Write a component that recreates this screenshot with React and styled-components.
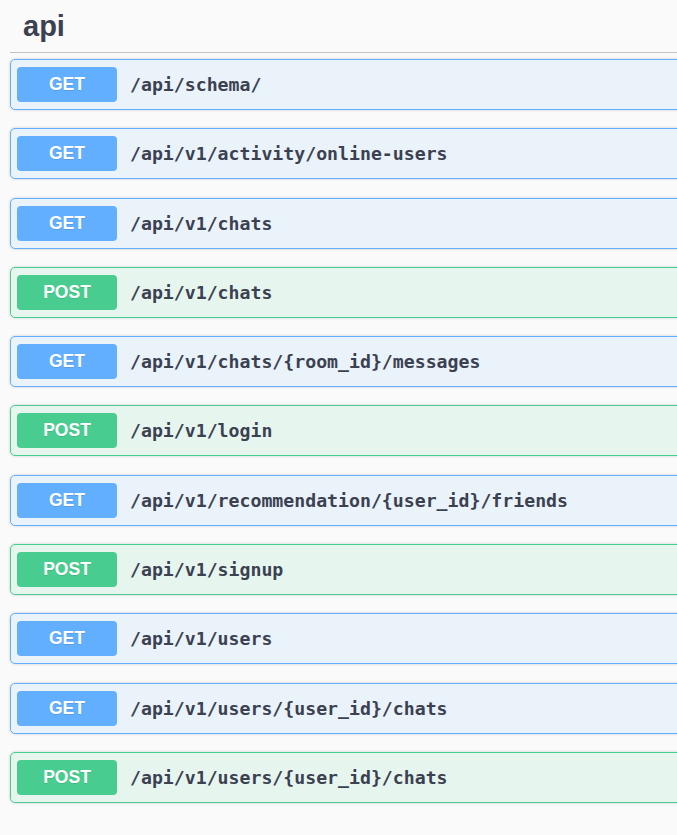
import React from "react";
import styled, { createGlobalStyle } from "styled-components";

const Global = createGlobalStyle`
  html, body {
    margin: 0;
    padding: 0;
    background: #fafafa;
    overflow: hidden;
  }
  body {
    font-family: "Liberation Sans", Arial, sans-serif;
    color: #3b4151;
  }
`;

const Page = styled.div`
  box-sizing: border-box;
  width: 100%;
  padding: 0 0 0 10px;
  overflow: hidden;
`;

const Section = styled.section`
  margin-right: -12px;
`;

const TagHeader = styled.h4`
  margin: 0;
  height: 52px;
  display: flex;
  align-items: center;
  padding: 0 0 0 13px;
  font-family: "Liberation Sans", Arial, sans-serif;
  font-size: 29px;
  font-weight: 700;
  color: #3b4151;
  border-bottom: 1px solid rgba(59, 65, 81, 0.3);
  margin-bottom: 6px;
`;

const List = styled.div`
  display: flex;
  flex-direction: column;
  gap: 18.3px;
  padding-bottom: 20px;
`;

const palette = {
  GET: { main: "#61affe", bg: "rgba(97, 175, 254, 0.1)" },
  POST: { main: "#49cc90", bg: "rgba(73, 204, 144, 0.1)" },
};

const Block = styled.div`
  box-sizing: border-box;
  height: 51px;
  display: flex;
  align-items: center;
  padding: 0 6px;
  border: 1px solid ${(p) => palette[p.$method].main};
  background: ${(p) => palette[p.$method].bg};
  border-radius: 5px;
  box-shadow: 0 0 3px rgba(0, 0, 0, 0.19);
`;

const Method = styled.span`
  flex: none;
  width: 100px;
  height: 35px;
  display: flex;
  align-items: center;
  justify-content: center;
  border-radius: 4px;
  background: ${(p) => palette[p.$method].main};
  color: #fff;
  font-family: "Liberation Sans", Arial, sans-serif;
  font-weight: 700;
  font-size: 17.5px;
  text-shadow: 0 1px 0 rgba(0, 0, 0, 0.1);
`;

const Path = styled.span`
  margin-left: 13px;
  font-family: "DejaVu Sans Mono", "Liberation Mono", monospace;
  font-weight: 700;
  font-size: 18.2px;
  color: #3b4151;
  white-space: nowrap;
`;

const ops = [
  ["GET", "/api/schema/"],
  ["GET", "/api/v1/activity/online-users"],
  ["GET", "/api/v1/chats"],
  ["POST", "/api/v1/chats"],
  ["GET", "/api/v1/chats/{room_id}/messages"],
  ["POST", "/api/v1/login"],
  ["GET", "/api/v1/recommendation/{user_id}/friends"],
  ["POST", "/api/v1/signup"],
  ["GET", "/api/v1/users"],
  ["GET", "/api/v1/users/{user_id}/chats"],
  ["POST", "/api/v1/users/{user_id}/chats"],
];

export default function App() {
  return (
    <>
      <Global />
      <Page>
        <Section>
          <TagHeader>api</TagHeader>
          <List>
            {ops.map(([m, p], i) => (
              <Block key={i} $method={m}>
                <Method $method={m}>{m}</Method>
                <Path>{p}</Path>
              </Block>
            ))}
          </List>
        </Section>
      </Page>
    </>
  );
}
